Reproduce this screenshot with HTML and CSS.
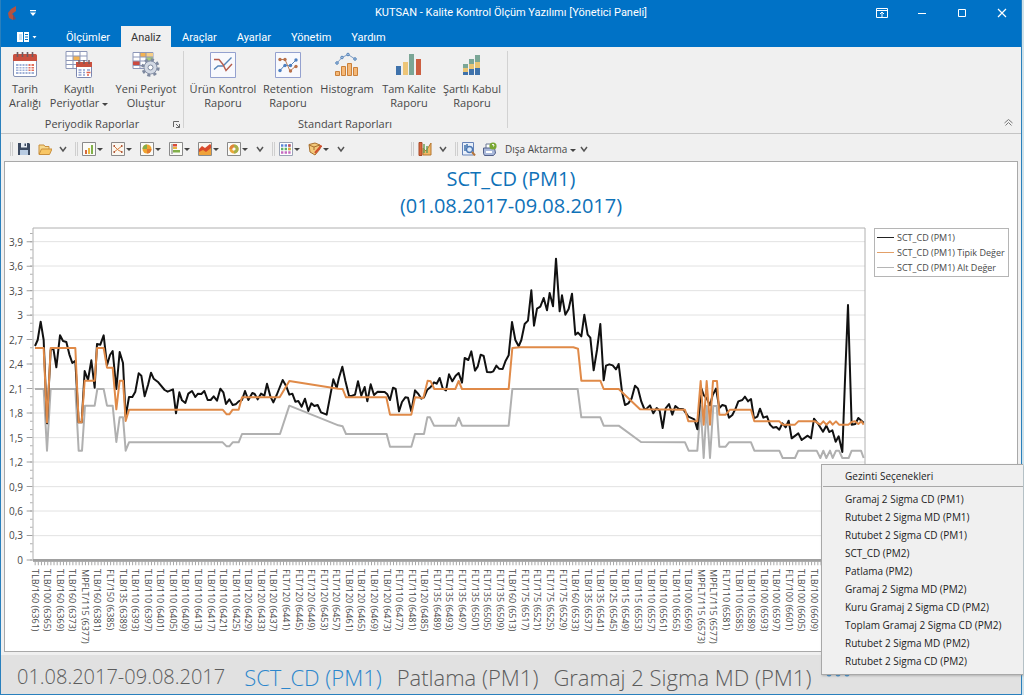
FILE: index.html
```html
<!DOCTYPE html>
<html lang="tr">
<head>
<meta charset="utf-8">
<title>KUTSAN - Kalite Kontrol Ölçüm Yazılımı</title>
<link rel="stylesheet" href="styles.css">
</head>
<body>
<div class="window">
  <header class="titlebar">
    <div class="title-left">
      <svg class="logo" width="10" height="14" viewBox="0 0 10 14"><path d="M8 0 3 3 0 7l1 5 4 2V9l-1-1 4-3z" fill="#b5523f"/><path d="M5 8l3 5-3 1z" fill="#7a4a5c"/></svg>
      <button class="quick" aria-label="Hızlı erişim"><svg width="6" height="6" viewBox="0 0 6 6"><path d="M0 0h6v1.300H0zM0 2.500h6L3 6z" fill="#fff"/></svg></button>
    </div>
    <h1 class="title-text">KUTSAN - Kalite Kontrol Ölçüm Yazılımı [Yönetici Paneli]</h1>
    <div class="win-buttons">
      <button aria-label="Şerit seçenekleri"><svg width="12" height="10" viewBox="0 0 12 10" fill="none" stroke="#fff"><path d="M.5.5h11v9H.500zM.5 2.500h11M6 9V4.500M4 6l2-2 2 2"/></svg></button>
      <button aria-label="Simge durumuna küçült"><svg width="10" height="10" viewBox="0 0 10 10"><path d="M1 5.500h8" stroke="#fff"/></svg></button>
      <button aria-label="Ekranı kapla"><svg width="10" height="10" viewBox="0 0 10 10"><path d="M1.500 1.500h7v7h-7z" fill="none" stroke="#fff"/></svg></button>
      <button aria-label="Kapat"><svg width="10" height="10" viewBox="0 0 10 10"><path d="M1 1l8 8M9 1 1 9" stroke="#fff" stroke-width="1.200"/></svg></button>
    </div>
  </header>

  <nav class="tabs">
    <button class="app-menu" aria-label="Menü"><svg width="20" height="10" viewBox="0 0 20 10"><path d="M0 0h12v10H0z" fill="#fff"/><path d="M6.500 0v10M8 2.500h3M8 5h3M8 7.500h3" stroke="#0072c6"/><path d="M2 2h3v6H2z" fill="#c6dff2"/><path d="M15.500 4h4l-2 2.500z" fill="#fff"/></svg></button>
    <button class="tab">Ölçümler</button>
    <button class="tab active">Analiz</button>
    <button class="tab">Araçlar</button>
    <button class="tab">Ayarlar</button>
    <button class="tab">Yönetim</button>
    <button class="tab">Yardım</button>
  </nav>

  <section class="ribbon">
    <div class="group">
      <div class="group-items">
        <button class="cmd w-s">
          <svg width="26" height="26" viewBox="0 0 26 26"><rect x="1.500" y="3" width="23" height="21.500" rx="1.500" fill="#fff" stroke="#8592b5"/><path d="M1 9V3.500Q1 2 2.500 2h21Q25 2 25 3.500V9z" fill="#c9503f"/><path d="M4 12h18v10H4z" fill="#9fb0d6"/><path d="M16 12h6v7h-6z" fill="#e2705e"/><path d="M4 14.500h18M4 17h18M4 19.500h18M7 12v10M10 12v10M13 12v10M16 12v10M19 12v10" stroke="#fff" stroke-width="1"/><path d="M5.500 0v5M10.500 0v5M15.500 0v5M20.500 0v5" stroke="#6f5b5f" stroke-width="1.600"/></svg>
          <span>Tarih<br>Aralığı</span>
        </button>
        <button class="cmd w-m">
          <svg width="28" height="28" viewBox="0 0 28 28"><path d="M1 .5h21v17H1z" fill="#fff" stroke="#8d97b8"/><path d="M8 5h7v4H8z" fill="#f3b252"/><path d="M1 5h21M1 9.500h21M1 13.500h21M8 0v18M15 0v18" stroke="#8d97b8"/><rect x="11.500" y="12" width="15" height="14.500" rx="1" fill="#fff" stroke="#7b86b0"/><path d="M11 11h16v5H11z" fill="#c9503f"/><path d="M13.500 19h3M18 19h2M22 19h3M13.500 21.500h3M18 21.500h2M13.500 24h3M18 24h2" stroke="#8fa0cf" stroke-width="1.400"/><path d="M21.500 21.500h4M22 24h2" stroke="#e0604c" stroke-width="1.400"/><path d="M14 9v4M19 9v4M24 9v4" stroke="#6f5b5f" stroke-width="1.400"/></svg>
          <span>Kayıtlı<br>Periyotlar <i class="arrow"></i></span>
        </button>
        <button class="cmd w-l">
          <svg width="28" height="28" viewBox="0 0 28 28"><path d="M1 1.500h20v16H1z" fill="#fff" stroke="#8d97b8"/><path d="M8 2h6v4H8z" fill="#f3b252"/><path d="M14 2h7v4h-7z" fill="#f6cf87"/><path d="M1 10h7v5H1z" fill="#cb4a40"/><path d="M14 6h7v4h-7z" fill="#a9c97a"/><path d="M1 6h20M1 10h20M1 14.500h20M8 1v17M14 1v17" stroke="#8d97b8"/><circle cx="18.500" cy="16.500" r="7.500" fill="none" stroke="#7f8aa0" stroke-width="3.400" stroke-dasharray="3 2.900"/><circle cx="18.500" cy="16.500" r="6.500" fill="#d3d9e4" stroke="#8792a8"/><circle cx="18.500" cy="16.500" r="2.500" fill="#fff" stroke="#7f8aa0"/></svg>
          <span>Yeni Periyot<br>Oluştur</span>
        </button>
      </div>
      <div class="caption">Periyodik Raporlar</div>
      <button class="launcher" aria-label="Periyodik Raporlar seçenekleri"><svg width="7" height="7" viewBox="0 0 7 7" fill="none" stroke="#666"><path d="M.5 6V.5H6M3 3l3.500 3.500M6.500 3v3.500H3"/></svg></button>
    </div>
    <div class="group">
      <div class="group-items">
        <button class="cmd w-l">
          <svg width="26" height="26" viewBox="0 0 26 26"><path d="M.5.5h25v25H.500z" fill="#f8f9fd" stroke="#94a1cf"/><path d="M4 17.500 8 14h5l8.500-8.500" fill="none" stroke="#5684b8" stroke-width="1.400"/><path d="M4 7.500h5l4 5 3 6 6-6.500" fill="none" stroke="#b65c4c" stroke-width="1.400"/></svg>
          <span>Ürün Kontrol<br>Raporu</span>
        </button>
        <button class="cmd w-r">
          <svg width="26" height="26" viewBox="0 0 26 26"><path d="M.5.5h25v25H.500z" fill="#f8f9fd" stroke="#94a1cf"/><path d="M5 18.500 10 13l5 1 6-6" fill="none" stroke="#5684b8"/><path d="M5 7.500h5l5 11.500 6-5" fill="none" stroke="#b87e58"/><g fill="#4b7ec0"><circle cx="5" cy="18.500" r="1.700"/><circle cx="10" cy="13.500" r="1.700"/><circle cx="15.500" cy="13.500" r="1.700"/><circle cx="21" cy="8" r="1.700"/></g><g fill="#b8704a"><circle cx="5" cy="7.500" r="1.700"/><circle cx="10" cy="7.500" r="1.700"/><circle cx="15.500" cy="19" r="1.700"/><circle cx="21" cy="14.500" r="1.700"/></g></svg>
          <span>Retention<br>Raporu</span>
        </button>
        <button class="cmd w-h">
          <svg width="26" height="26" viewBox="0 0 26 26"><path d="M3 11 8 5.500l6-3L21 7" fill="none" stroke="#7d9cc4"/><g fill="#a9c4e6" stroke="#5684b8"><circle cx="3" cy="11" r="1.300"/><circle cx="8" cy="5.500" r="1.300"/><circle cx="14" cy="2.500" r="1.300"/><circle cx="21" cy="7" r="1.300"/></g><g fill="#f5b877" stroke="#c9803a"><path d="M1.500 19.500h4v4h-4zM7.500 14.500h4v9h-4zM13.500 11.500h4v12h-4zM19.500 15.500h4v8h-4z"/></g></svg>
          <span>Histogram</span>
        </button>
        <button class="cmd w-l">
          <svg width="26" height="26" viewBox="0 0 26 26"><path d="M0 14h5v9H0z" fill="#3f72ab"/><path d="M7 10h5v13H7z" fill="#edc578"/><path d="M13 2h5v21h-5z" fill="#7ba696"/><path d="M20 7h5v16h-5z" fill="#cc5f41"/></svg>
          <span>Tam Kalite<br>Raporu</span>
        </button>
        <button class="cmd w-k">
          <svg width="26" height="26" viewBox="0 0 26 26"><path d="M4 20h5v3H4zM10 17h5v6h-5zM16 16h5v7h-5z" fill="#3f72ab"/><path d="M4 16h5v4H4zM10 12h5v5h-5zM16 10h5v6h-5z" fill="#e9c473"/><path d="M4 12h5v4H4zM10 7h5v5h-5zM16 3h5v7h-5z" fill="#7ba696"/></svg>
          <span>Şartlı Kabul<br>Raporu</span>
        </button>
      </div>
      <div class="caption">Standart Raporları</div>
    </div>
    <button class="collapse" aria-label="Şeridi daralt"><svg width="9" height="7" viewBox="0 0 9 7" fill="none" stroke="#777"><path d="M.5 4l4-3.500 4 3.500M1.500 6.500l3-3 3 3"/></svg></button>
  </section>

  <div class="toolbar">
    <i class="grip"></i>
    <button class="tool" aria-label="Kaydet"><svg viewBox="0 0 14 14"><path d="M1 1h11l1 1v11H1z" fill="#3c4a61"/><path d="M4 1h6v4.500H4z" fill="#e8eef5"/><path d="M7.500 1.500H9V4H7.500z" fill="#3c4a61"/><path d="M3 8h8v5H3z" fill="#b8cbe2"/></svg></button>
    <button class="tool" aria-label="Aç"><svg viewBox="0 0 14 14"><path d="M1 12V3h5l1 1.500h4V7" fill="#f7d98e" stroke="#c98f3c"/><path d="M1 12.500 3.500 7H14l-2.500 5.500z" fill="#f8c665" stroke="#c98f3c"/></svg></button>
    <button class="more" aria-label="Diğer"><svg viewBox="0 0 8 8"><path d="M1 2l3 4 3-4" /></svg></button>
    <i class="grip"></i>
    <button class="tool drop" aria-label="Sütun"><svg viewBox="0 0 14 14"><path d="M.5.5h13v13H.500z" fill="#fbfbf8" stroke="#8a8a8a"/><path d="M3 8h2v4H3z" fill="#d96a3a"/><path d="M6 6h2v6H6z" fill="#e8b840"/><path d="M9 3h2v9H9z" fill="#82b04a"/></svg><i class="arrow"></i></button>
    <button class="tool drop" aria-label="Çizgi"><svg viewBox="0 0 14 14"><path d="M.5.5h13v13H.500z" fill="#fbf7ef" stroke="#8a8a8a"/><path d="M3 4l4 4 4 2M3 10l4-3 4-3" fill="none" stroke="#d98246"/><path d="M2.500 3H4v2H2.500zM10 3h1.500v2H10zM2.500 9H4v2H2.500zM10 9h1.500v2H10z" fill="#b25a3c"/></svg><i class="arrow"></i></button>
    <button class="tool drop" aria-label="Pasta"><svg viewBox="0 0 14 14"><path d="M.5.5h13v13H.500z" fill="#fbfbf8" stroke="#8a8a8a"/><circle cx="7" cy="7" r="4.500" fill="#f0a430"/><path d="M7 7V2.500A4.500 4.500 0 0 0 2.500 7z" fill="#86ad48"/><path d="M7 7h4.500A4.500 4.500 0 0 1 7 11.500z" fill="#e07a33"/></svg><i class="arrow"></i></button>
    <button class="tool drop" aria-label="Çubuk"><svg viewBox="0 0 14 14"><path d="M.5.5h13v13H.500z" fill="#fbfbf8" stroke="#8a8a8a"/><path d="M3 2v10" stroke="#777"/><path d="M4 2h4v2.500H4z" fill="#d94d3a"/><path d="M4 5h4v2H4z" fill="#e8b840"/><path d="M4 8h7v2.500H4z" fill="#82b04a"/></svg><i class="arrow"></i></button>
    <button class="tool drop" aria-label="Alan"><svg viewBox="0 0 14 14"><path d="M.5.5h13v13H.500z" fill="#fbf7ef" stroke="#8a8a8a"/><path d="M1 7l3-3 3 2 5-4 1 1v10H1z" fill="#d94a2b"/><path d="M1 10l4-2 3 2 5-4v7H1z" fill="#efa33a"/></svg><i class="arrow"></i></button>
    <button class="tool drop" aria-label="Halka"><svg viewBox="0 0 14 14"><path d="M.5.5h13v13H.500z" fill="#fbfbf8" stroke="#8a8a8a"/><circle cx="7" cy="7" r="3.200" fill="none" stroke="#e9a83a" stroke-width="2.800"/><path d="M7 3.800A3.200 3.200 0 0 1 7 10.200" fill="none" stroke="#a3b04a" stroke-width="2.800"/><path d="M3.800 7A3.200 3.200 0 0 1 7 3.800" fill="none" stroke="#e0843a" stroke-width="2.800"/></svg><i class="arrow"></i></button>
    <button class="more" aria-label="Diğer grafikler"><svg viewBox="0 0 8 8"><path d="M1 2l3 4 3-4" /></svg></button>
    <i class="grip"></i>
    <button class="tool drop" aria-label="Palet"><svg viewBox="0 0 14 14"><path d="M.5.5h13v13H.500z" fill="#fff" stroke="#9aa3b5"/><path d="M2 3.500h10" stroke="#5b85d6" stroke-width="2.400" stroke-dasharray="2.400 1.200"/><path d="M2 7h10" stroke="#5fb06a" stroke-width="2.400" stroke-dasharray="2.400 1.200"/><path d="M2 10.500h10" stroke="#c46ac0" stroke-width="2.400" stroke-dasharray="2.400 1.200"/><path d="M9.200 2.300h2.400v2.400H9.200z" fill="#d65050"/><path d="M9.200 5.800h2.400v2.400H9.200z" fill="#e8a63a"/></svg><i class="arrow"></i></button>
    <button class="tool drop" aria-label="Biçim"><svg viewBox="0 0 14 14"><path d="M1 2.500 7 1l5 2v4l-5 6-5-3z" fill="#f3c97a" stroke="#a8702f"/><path d="M1 3l5 2 6-2M6 5v3" fill="none" stroke="#a8702f"/><path d="M13.500 3.500 7 11" stroke="#d0502e" stroke-width="2"/></svg><i class="arrow"></i></button>
    <button class="more" aria-label="Diğer biçimler"><svg viewBox="0 0 8 8"><path d="M1 2l3 4 3-4" /></svg></button>
    <span class="spacer"></span>
    <i class="grip"></i>
    <button class="tool" aria-label="Sihirbaz"><svg viewBox="0 0 14 14"><path d="M1 .5h3v13H1z" fill="#d9643a" stroke="#a54a28"/><path d="M5 13V6l3 3 5-8v12z" fill="#f2b866" stroke="#b5762f"/><path d="M6 2v9M9 4v7" stroke="#6a9f58" stroke-width="1.500"/></svg></button>
    <button class="more" aria-label="Diğer araçlar"><svg viewBox="0 0 8 8"><path d="M1 2l3 4 3-4" /></svg></button>
    <i class="grip"></i>
    <button class="tool" aria-label="Baskı önizleme"><svg viewBox="0 0 14 14"><path d="M.5.5h11v12.500H.500z" fill="#e9f0fa" stroke="#6683b8"/><path d="M3 3v6M5 2v3" stroke="#3f72ab" stroke-width="1.500"/><circle cx="7.500" cy="7.500" r="3" fill="#dceaf8" stroke="#4a76b3" stroke-width="1.300"/><path d="M10 10l3 3.500" stroke="#b5763c" stroke-width="2"/></svg></button>
    <button class="tool" aria-label="Yazdır"><svg viewBox="0 0 14 14"><path d="M3 6V2h7v4" fill="#fff" stroke="#6b7894"/><path d="M.5 6h11l1 5-2 2.500h-9l-1-2z" fill="#aab9da" stroke="#53618a"/><path d="M3 9h6v2H3z" fill="#fff"/><circle cx="10" cy="4" r="3.600" fill="#7aa832"/><path d="M9 3q1-1.500 2 0 0 1-1 1.500" fill="none" stroke="#fff"/></svg></button>
    <button class="export">Dışa Aktarma <i class="arrow"></i></button>
    <button class="more" aria-label="Diğer aktarma"><svg viewBox="0 0 8 8"><path d="M1 2l3 4 3-4" /></svg></button>
  </div>

  <main class="chart">
    <h2 class="chart-title">SCT_CD (PM1)<br>(01.08.2017-09.08.2017)</h2>
    <div class="y-axis">
      <span>3,9</span><span>3,6</span><span>3,3</span><span>3</span><span>2,7</span><span>2,4</span><span>2,1</span><span>1,8</span><span>1,5</span><span>1,2</span><span>0,9</span><span>0,6</span><span>0,3</span><span>0</span>
    </div>
    <div class="plot">
      <svg viewBox="99 189 2496 999" preserveAspectRatio="none">
        <path class="grid-line" d="M99 230H2595M99 303H2595M99 377H2595M99 450H2595M99 524H2595M99 597H2595M99 671H2595M99 744H2595M99 818H2595M99 891H2595M99 965H2595M99 1038H2595M99 1112H2595"/>
        <path class="frame" d="M99 189H2595V1188H99z"/>
        <path d="M94 1186.500V189" stroke="#b0b0b0" stroke-width="8" stroke-dasharray="3 21.490" fill="none"/>
        <path d="M88 1186.500V189" stroke="#a0a0a0" stroke-width="16" stroke-dasharray="3 70.460" fill="none"/>
        <path d="M99 1186H2595" stroke="#a0a0a0" stroke-width="8" fill="none"/>
        <path d="M104 1195H2595" stroke="#a8a8a8" stroke-width="12" stroke-dasharray="3 6.430" fill="none"/>
        <polyline class="series low" points="105,672 131,672 141,857 152,672 226,672 236,857 246,857 255,722 284,722 292,672 311,672 321,722 338,722 349,831 359,757 369,757 377,857 387,832 668,832 680,844 688,844 698,832 716,832 726,807 840,807 868,722 1015,781 1028,784 1038,807 1160,807 1170,845 1234,845 1245,807 1272,807 1282,757 1290,757 1302,782 1367,782 1376,758 1386,782 1526,782 1537,672 1733,672 1744,757 1801,757 1811,782 1856,782 1923,831 2055,832 2066,857 2092,857 2102,723 2111,879 2120,723 2130,879 2140,723 2150,723 2158,845 2177,845 2187,832 2253,832 2263,857 2338,857 2348,879 2385,879 2395,857 2450,857 2461,879 2470,857 2479,879 2490,857 2498,879 2508,857 2517,857 2527,879 2546,879 2555,857 2583,857 2591,879"/>
        <polyline class="series measured" points="105,543 113,525 122,470 131,525 141,775 152,555 160,550 169,607 180,511 189,528 199,531 208,568 217,594 226,587 236,772 245,772 254,618 264,645 274,586 284,668 291,537 301,539 311,511 321,601 330,570 338,558 349,672 359,561 369,594 377,755 387,696 397,696 406,680 416,625 424,632 434,694 444,660 453,623 461,641 475,652 494,675 503,680 519,673 528,745 538,682 546,706 556,714 565,686 576,678 586,696 594,686 604,687 613,678 623,705 632,705 641,694 651,707 661,671 670,682 678,717 688,703 698,720 707,718 716,709 726,705 735,678 745,705 757,684 764,687 773,703 783,686 793,692 801,656 811,694 820,712 830,690 848,645 858,662 868,689 877,686 886,710 895,708 905,725 915,701 925,738 934,715 943,723 953,720 963,742 980,749 1000,643 1010,669 1017,638 1027,605 1036,647 1047,692 1055,693 1065,689 1074,649 1084,692 1094,666 1102,709 1112,658 1122,690 1133,680 1154,681 1162,688 1170,705 1179,668 1187,672 1197,739 1206,711 1216,697 1224,698 1234,739 1245,676 1255,687 1264,701 1272,697 1282,674 1292,666 1302,652 1310,656 1319,639 1328,670 1338,676 1347,628 1357,649 1367,632 1376,624 1386,653 1394,579 1405,585 1414,559 1425,617 1433,605 1442,569 1451,573 1461,621 1472,622 1480,619 1489,602 1497,611 1508,612 1517,587 1526,571 1536,471 1546,525 1556,544 1564,525 1574,477 1584,467 1594,376 1602,482 1611,431 1621,425 1631,399 1641,436 1649,384 1659,424 1668,281 1679,439 1686,391 1696,449 1706,432 1716,386 1726,509 1734,503 1744,514 1753,449 1763,509 1771,518 1781,616 1791,555 1801,477 1811,646 1818,602 1828,598 1838,601 1848,613 1856,597 1866,680 1875,720 1885,715 1895,700 1905,662 1914,671 1924,710 1933,732 1940,731 1950,721 1960,745 1970,729 1979,737 1988,789 1997,730 2007,717 2017,749 2026,723 2036,731 2050,733 2065,755 2083,763 2092,793 2104,670 2111,690 2120,700 2130,721 2138,690 2148,671 2158,729 2167,720 2177,723 2187,758 2197,750 2207,730 2215,709 2227,705 2235,695 2244,709 2253,702 2262,760 2272,755 2280,731 2290,758 2301,754 2310,779 2319,788 2329,786 2338,794 2347,775 2357,787 2366,767 2375,820 2395,805 2405,825 2423,812 2433,820 2442,761 2453,775 2469,800 2479,782 2488,801 2497,796 2507,830 2516,814 2527,861 2535,645 2544,420 2555,779 2566,777 2575,759 2591,773"/>
        <polyline class="series typical" points="105,549 131,549 141,772 152,549 226,549 236,772 245,772 254,647 284,647 291,549 311,549 321,608 338,608 349,733 359,647 369,647 377,768 387,734 668,734 680,748 688,748 698,734 716,734 726,697 839,697 868,648 1015,671 1028,672 1038,697 1159,697 1170,749 1234,749 1245,697 1270,699 1283,647 1292,649 1303,672 1366,672 1376,648 1386,672 1526,672 1537,549 1560,547 1720,547 1734,551 1744,647 1801,647 1811,672 1856,672 1920,733 2055,734 2065,769 2092,769 2102,648 2111,779 2120,648 2130,779 2139,648 2151,648 2158,749 2177,749 2190,734 2253,734 2263,769 2338,769 2348,779 2385,779 2395,769 2445,769 2461,779 2470,769 2479,779 2490,769 2498,779 2508,769 2517,779 2545,779 2555,771 2565,769 2575,777 2584,769 2591,779"/>
      </svg>
    </div>
    <ul class="legend">
      <li class="measured">SCT_CD (PM1)</li>
      <li class="typical">SCT_CD (PM1) Tipik Değer</li>
      <li class="low">SCT_CD (PM1) Alt Değer</li>
    </ul>
    <div class="x-axis" id="x-axis"></div>
  </main>

  <footer class="status">
    <span>01.08.2017-09.08.2017</span>
    <button class="current">SCT_CD (PM1)</button>
    <button>Patlama (PM1)</button>
    <button>Gramaj 2 Sigma MD (PM1)</button>
    <button class="overflow" aria-label="Diğer seçenekler"><svg width="24" height="6" viewBox="0 0 24 6" fill="#2b86cc"><circle cx="3" cy="3" r="2.500"/><circle cx="12" cy="3" r="2.500"/><circle cx="21" cy="3" r="2.500"/></svg></button>
  </footer>

  <div class="menu" role="menu">
    <div class="menu-head">Gezinti Seçenekleri</div>
    <button role="menuitem">Gramaj 2 Sigma CD (PM1)</button>
    <button role="menuitem">Rutubet 2 Sigma MD (PM1)</button>
    <button role="menuitem">Rutubet 2 Sigma CD (PM1)</button>
    <button role="menuitem">SCT_CD (PM2)</button>
    <button role="menuitem">Patlama (PM2)</button>
    <button role="menuitem">Gramaj 2 Sigma MD (PM2)</button>
    <button role="menuitem">Kuru Gramaj 2 Sigma CD (PM2)</button>
    <button role="menuitem">Toplam Gramaj 2 Sigma CD (PM2)</button>
    <button role="menuitem">Rutubet 2 Sigma MD (PM2)</button>
    <button role="menuitem">Rutubet 2 Sigma CD (PM2)</button>
  </div>
</div>
<script src="chart.js"></script>
</body>
</html>
```
FILE: styles.css
```css
* { box-sizing: border-box; }
body { margin: 0; background: #cfe2ea; font: 11px/14px "Open Sans", "Noto Sans", sans-serif; color: #484848; }
button { border: 0; padding: 0; background: none; font: inherit; color: inherit; }
svg { display: block; }
h1, h2, ul { margin: 0; padding: 0; font-weight: 400; }

.window { position: relative; display: flex; flex-direction: column; height: 100vh; min-height: 560px; margin-right: 2px; background: #f0f0f0; border: 1px solid #2a80bd; border-top: 0; }

.titlebar { display: grid; grid-template-columns: 1fr auto 1fr; align-items: center; height: 26px; flex: none; background: #0072c6; color: #fff; }
.title-left { display: flex; align-items: center; gap: 12px; padding-left: 7px; }
.title-text { font-family: Roboto, "Open Sans", sans-serif; font-size: 11px; line-height: 26px; }
.win-buttons { display: flex; justify-content: flex-end; gap: 2px; }
.win-buttons button { display: grid; place-items: center; width: 38px; height: 26px; }

.tabs { display: flex; height: 21px; flex: none; background: #0072c6; color: #fff; font-family: Roboto, "Open Sans", sans-serif; }
.app-menu { width: 50px; padding-left: 16px; margin-right: 5px; }
.tab { padding: 3px 10px 0; }
.tab.active { background: #f0f0f0; color: #333; margin: 0 1px; }

.ribbon { display: flex; flex: none; height: 87px; padding-left: 3px; border-bottom: 1px solid #c4c4c4; }
.group { position: relative; display: flex; flex-direction: column; padding: 4px 4px 1px 0; }
.group::after { content: ""; position: absolute; right: 0; top: 4px; bottom: 5px; border-right: 1px solid #d2d2d2; }
.group + .group { padding: 4px 7px 1px 5px; }
.group-items { display: flex; flex: 1; }
.cmd { display: flex; flex-direction: column; align-items: center; white-space: nowrap; }
.cmd svg { height: 28px; margin-bottom: 3px; }
.w-s { width: 42px; } .w-m { width: 66px; } .w-l { width: 68px; }
.w-r { width: 62px; } .w-h { width: 56px; } .w-k { width: 58px; }
.caption { text-align: center; line-height: 17px; }
.launcher { position: absolute; right: 4px; bottom: 5px; }
.collapse { margin: auto 8px 7px auto; }
.arrow { display: inline-block; border: 3px solid transparent; border-top-color: #444; border-bottom: 0; vertical-align: middle; flex: none; }

.toolbar { display: flex; align-items: center; flex: none; height: 27px; padding: 3px 0 0 1px; }
.grip { width: 3px; height: 14px; margin: 0 4px 0 8px; border: solid #cfcfcf; border-width: 0 1px; }
.tool { display: flex; align-items: center; gap: 1px; width: 21px; }
.tool svg { width: 14px; height: 14px; }
.tool.drop { width: 29px; }
.more svg { width: 8px; height: 8px; fill: none; stroke: #555; stroke-width: 1.500; }
.spacer { width: 58px; }
.export { padding: 0 4px 0 1px; font-size: 10px; white-space: nowrap; }

.chart { display: grid; flex: 1; min-height: 0; grid-template-columns: 28px 1fr 152px; grid-template-rows: 66px 1fr 90px; margin: 0 3px 3px; background: #fff; border: 1px solid #a9a9a9; font-size: 10px; }
.chart-title { grid-column: 1 / 4; padding-top: 3px; text-align: center; color: #0f72b8; font-size: 20px; line-height: 27px; }
.y-axis { display: flex; flex-direction: column; justify-content: space-between; padding: 14px 10px 1px 0; text-align: right; }
.y-axis span { height: 0; line-height: 0; }
.plot { min-height: 0; min-width: 0; }
.plot svg { width: 100%; height: 100%; overflow: visible; }
.grid-line, .frame, .series { fill: none; vector-effect: non-scaling-stroke; }
.grid-line { stroke: #e2e2e2; }
.frame { stroke: #b0b0b0; }
.series { stroke-width: 2px; stroke-linejoin: round; }
.plot .measured { stroke: #111; }
.plot .typical { stroke: #e08a48; }
.plot .low { stroke: #b0b0b0; }
.legend, .x-axis { font-size: 9px; }
.legend { align-self: start; width: 135px; margin-left: 9px; padding: 1px 0; border: 1px solid #b5b5b5; list-style: none; white-space: nowrap; }
.legend li { display: flex; align-items: center; gap: 3px; padding-left: 2px; line-height: 15px; }
.legend li::before { content: ""; width: 17px; border-top: 1px solid; flex: none; }
.legend .measured::before { border-color: #222; }
.legend .typical::before { border-color: #e3a068; }
.legend .low::before { border-color: #b5b5b5; }
.x-axis { grid-column: 2; display: grid; grid-template-columns: repeat(63, 1fr); width: 95.2%; margin-left: -5px; padding-top: 8px; }
.x-axis span { writing-mode: vertical-rl; width: 100%; line-height: 12px; white-space: nowrap; }

.status { display: flex; align-items: center; gap: 15px; flex: none; height: 39px; padding: 4px 16px 0; background: #e1e1e1; font-size: 20px; font-weight: 300; line-height: 30px; color: #5c5c5c; white-space: nowrap; overflow: hidden; }
.status span { margin-right: 4px; }
.status button { font-size: 22px; }
.status .current { color: #2b86cc; }
.status .overflow { padding-bottom: 6px; }

.menu { position: absolute; right: -2px; bottom: 19px; display: flex; flex-direction: column; width: 202px; padding: 2px 0 4px 1px; background: #f0f0f0; border: 1px solid #a8a8a8; border-right: 0; box-shadow: 1px 1px 2px #8888; color: #222; font-size: 10px; }
.menu-head { padding-left: 22px; line-height: 19px; margin-bottom: 3px; border-bottom: 1px solid #a8a8a8; }
.menu button { padding-left: 22px; text-align: left; line-height: 18px; }
```
FILE: chart.js
```js
const grades = ("TLB/160 TLB/100 TLB/160 TLB/160 MPFLT/115 TLB/160 FLT/150 TLB/135 TLB/110 TLB/110 TLB/110 TLB/110 TLB/110 TLB/110 TLB/110 TLB/110 TLB/110 TLB/120 TLB/120 TLB/120 " +
  "FLT/120 FLT/120 FLT/120 FLT/120 FLT/120 TLB/120 TLB/120 TLB/120 TLB/120 FLT/110 FLT/110 TLB/120 FLT/135 FLT/135 FLT/135 FLT/135 FLT/135 FLT/135 " +
  "TLB/160 FLT/175 FLT/175 FLT/175 FLT/175 TLB/160 TLB/135 TLB/135 TLB/125 TLB/115 TLB/115 TLB/110 TLB/110 TLB/110 TLB/100 " +
  "MPFLT/115 MPFLT/115 FLT/110 TLB/110 TLB/110 TLB/100 TLB/100 FLT/100 TLB/100 TLB/100").split(" ");
const axis = document.getElementById("x-axis");
grades.forEach((grade, i) => {
  const label = document.createElement("span");
  label.textContent = `${grade} (${6361 + i * 4})`;
  axis.append(label);
});
```
